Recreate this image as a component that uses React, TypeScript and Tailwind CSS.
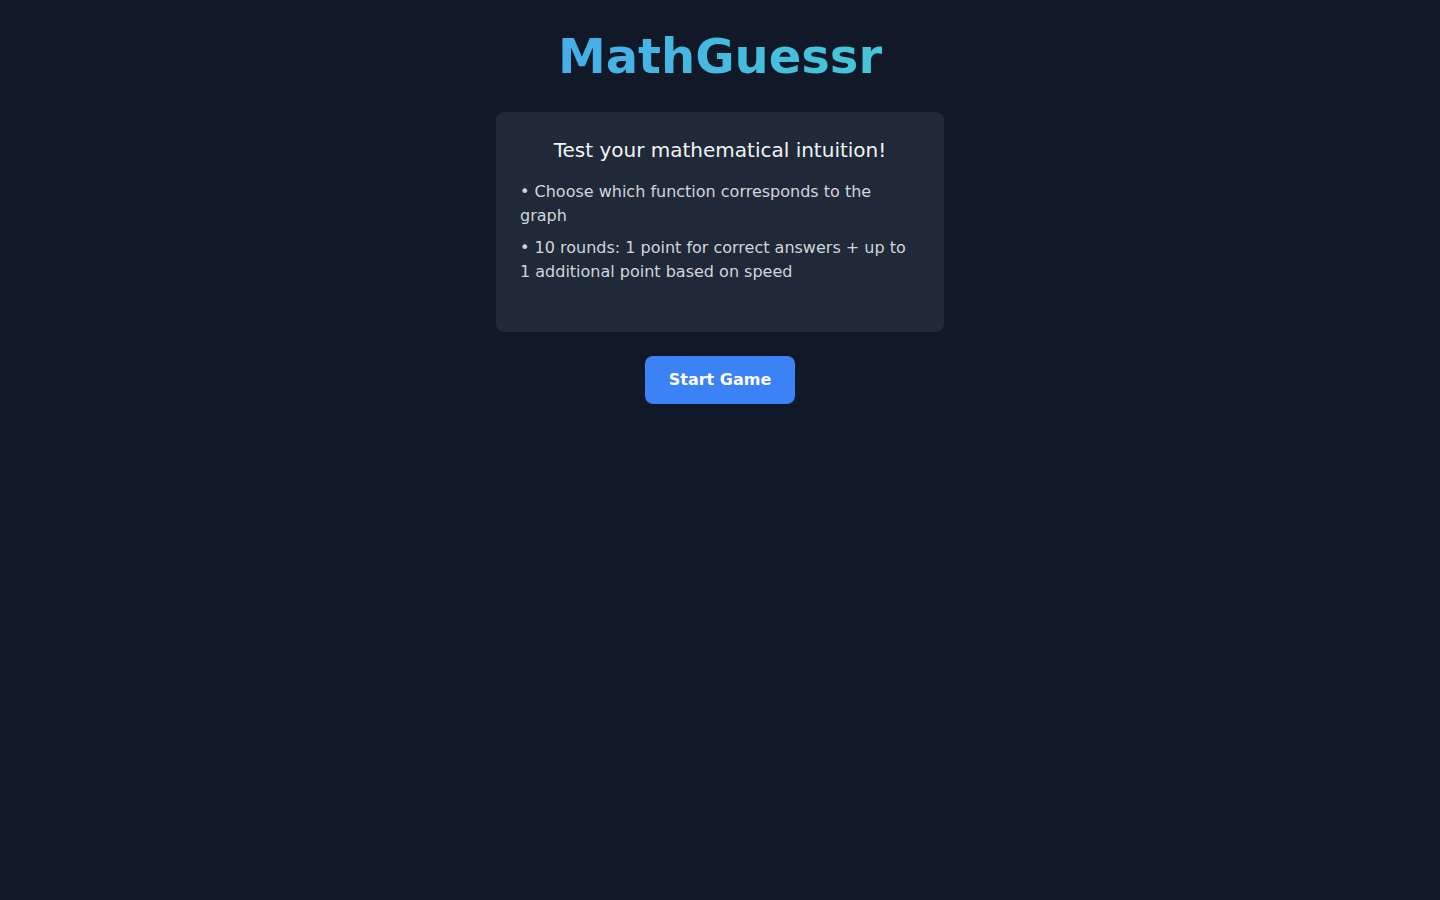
export default function App() {
  return (
    <div
      className="min-h-screen bg-[#111827] flex flex-col items-center pt-8 px-4"
      style={{ fontFamily: '"DejaVu Sans", Verdana, sans-serif' }}
    >
      <h1 className="text-5xl font-bold mb-8 bg-gradient-to-r from-[#47ade8] to-[#44c7d7] bg-clip-text text-transparent">
        MathGuessr
      </h1>

      <div className="w-full max-w-[448px] bg-[#1f2937] rounded-lg p-6">
        <h2 className="text-xl text-center text-[#f3f4f6] mb-4">Test your mathematical intuition!</h2>
        <ul className="space-y-2 mb-6 text-base text-[#d1d5db]">
          <li>• Choose which function corresponds to the graph</li>
          <li>• 10 rounds: 1 point for correct answers + up to 1 additional point based on speed</li>
        </ul>
      </div>

      <button className="mt-6 px-6 py-3 rounded-lg bg-[#3b82f6] text-white font-bold text-base">
        Start Game
      </button>
    </div>
  );
}
